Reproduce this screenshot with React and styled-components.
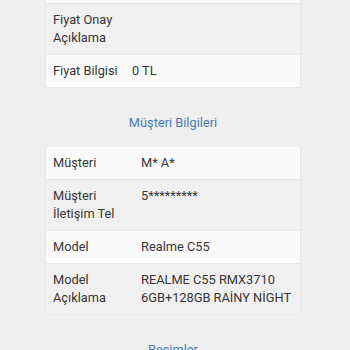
import React from "react";
import styled, { createGlobalStyle } from "styled-components";

const GlobalStyle = createGlobalStyle`
  html, body {
    margin: 0;
    padding: 0;
    background: #efefef;
  }
  body {
    font-family: Roboto, "Noto Sans", "Liberation Sans", sans-serif;
    color: #363636;
    overflow: hidden;
  }
`;

const Page = styled.div`
  width: 346px;
  margin-top: -29px;
  display: flex;
  flex-direction: column;
  align-items: center;
`;

const Card = styled.div`
  width: 256px;
  box-sizing: border-box;
  border: 1px solid #e6e6e6;
  border-top: none;
  border-bottom: none;
  background: #f1f1f1;
  display: flex;
  flex-direction: column;
`;

const Row = styled.div`
  display: grid;
  grid-template-columns: ${(p) => p.$labelWidth}px 1fr;
  padding: 7px 3px 7px 7px;
  background: ${(p) => (p.$alt ? "#f0f0f0" : "#fafafa")};
  border-bottom: 1px solid #e8e8e8;
  font-size: 12.8px;
  line-height: 18px;
`;

const Label = styled.div`
  padding-right: 6px;
`;

const Value = styled.div``;

const SectionTitle = styled.div`
  margin: 26px 0 15px;
  font-size: 12.8px;
  line-height: 18px;
  color: #4a7db3;
  text-align: center;
`;

const InfoCard = ({ rows, labelWidth }) => (
  <Card>
    {rows.map((r, i) => (
      <Row key={i} $alt={i % 2 === 1} $labelWidth={labelWidth}>
        <Label>{r[0]}</Label>
        <Value>{r[1]}</Value>
      </Row>
    ))}
  </Card>
);

export default function App() {
  return (
    <>
      <GlobalStyle />
      <Page>
        <InfoCard
          labelWidth={79}
          rows={[
            ["Fiyat Onay", ""],
            ["Fiyat Onay Açıklama", ""],
            ["Fiyat Bilgisi", "0 TL"],
          ]}
        />
        <SectionTitle>Müşteri Bilgileri</SectionTitle>
        <InfoCard
          labelWidth={88}
          rows={[
            ["Müşteri", "M* A*"],
            ["Müşteri İletişim Tel", "5*********"],
            ["Model", "Realme C55"],
            ["Model Açıklama", "REALME C55 RMX3710 6GB+128GB RAİNY NİGHT"],
          ]}
        />
        <SectionTitle>Resimler</SectionTitle>
      </Page>
    </>
  );
}
